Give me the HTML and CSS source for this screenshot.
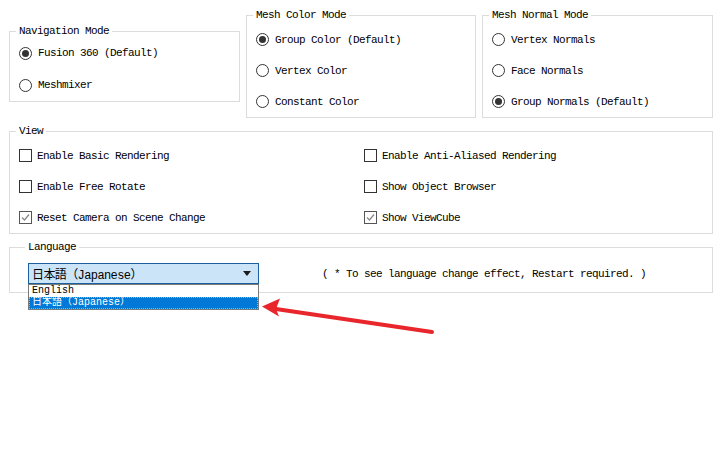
FILE: index.html
```html
<!DOCTYPE html>
<html lang="en">
<head>
<meta charset="utf-8">
<title>Preferences</title>
<link rel="stylesheet" href="styles.css">
</head>
<body>
<div class="page">
  <div class="top-row">
    <fieldset class="group nav">
      <legend>Navigation Mode</legend>
      <div class="opt"><span class="radio on"></span>Fusion 360 (Default)</div>
      <div class="opt"><span class="radio"></span>Meshmixer</div>
    </fieldset>
    <fieldset class="group mesh w230">
      <legend>Mesh Color Mode</legend>
      <div class="opt"><span class="radio on"></span>Group Color (Default)</div>
      <div class="opt"><span class="radio"></span>Vertex Color</div>
      <div class="opt"><span class="radio"></span>Constant Color</div>
    </fieldset>
    <fieldset class="group mesh">
      <legend>Mesh Normal Mode</legend>
      <div class="opt"><span class="radio"></span>Vertex Normals</div>
      <div class="opt"><span class="radio"></span>Face Normals</div>
      <div class="opt"><span class="radio on"></span>Group Normals (Default)</div>
    </fieldset>
  </div>

  <fieldset class="group view">
    <legend>View</legend>
    <div class="view-grid">
      <div class="opt"><span class="check"></span>Enable Basic Rendering</div>
      <div class="opt"><span class="check"></span>Enable Anti-Aliased Rendering</div>
      <div class="opt"><span class="check"></span>Enable Free Rotate</div>
      <div class="opt"><span class="check"></span>Show Object Browser</div>
      <div class="opt"><span class="check on"><svg viewBox="0 0 11 11" width="11" height="11"><polyline points="2,5.5 4.5,8 9,2.5" fill="none" stroke="#8a8a8a" stroke-width="1.3"/></svg></span>Reset Camera on Scene Change</div>
      <div class="opt"><span class="check on"><svg viewBox="0 0 11 11" width="11" height="11"><polyline points="2,5.5 4.5,8 9,2.5" fill="none" stroke="#8a8a8a" stroke-width="1.3"/></svg></span>Show ViewCube</div>
    </div>
  </fieldset>

  <fieldset class="group lang">
    <legend>Language</legend>
    <div class="lang-row">
      <div class="combo-wrap">
        <div class="combo"><span>日本語（Japanese）</span><span class="caret"></span></div>
        <ul class="dropdown">
          <li>English</li>
          <li class="sel">日本語（Japanese）</li>
        </ul>
      </div>
      <span class="note">( * To see language change effect, Restart required. )</span>
    </div>
  </fieldset>

  <svg class="arrow" width="722" height="461" viewBox="0 0 722 461">
    <line x1="432" y1="332" x2="276" y2="309" stroke="#e8262b" stroke-width="4" stroke-linecap="round"/>
    <polygon points="262,306.5 280,298.5 276,309 279,316.5" fill="#e8262b"/>
  </svg>
</div>
</body>
</html>
```

FILE: styles.css
```css
html, body {
  margin: 0;
  padding: 0;
  background: #ffffff;
}

.page {
  position: relative;
  width: 722px;
  height: 461px;
  padding: 9px 0 0 9px;
  box-sizing: border-box;
  font-family: "Liberation Mono", "Noto Sans CJK JP", monospace;
  font-size: 11px;
  letter-spacing: -0.6px;
  color: #000;
}

.top-row {
  display: flex;
  align-items: flex-start;
  gap: 6px;
}

.group {
  margin: 0;
  min-width: 0;
  box-sizing: border-box;
  border: 1px solid #dcdcdc;
  padding: 0 0 0 9px;
}

.group legend {
  padding: 0 3px;
  margin-left: -3px;
  line-height: 12px;
  height: 12px;
}

.nav {
  width: 231px;
  margin-top: 16px;
}

.nav .opt {
  height: 32px;
}

.mesh {
  width: 231px;
  padding-top: 3px;
}

.mesh.w230 {
  width: 230px;
}

.opt {
  display: flex;
  align-items: center;
  gap: 6px;
  height: 31px;
  white-space: nowrap;
}

.radio {
  flex: none;
  width: 13px;
  height: 13px;
  box-sizing: border-box;
  border: 1px solid #333;
  border-radius: 50%;
  background: #fff;
  display: flex;
  align-items: center;
  justify-content: center;
}

.radio.on::after {
  content: "";
  width: 7px;
  height: 7px;
  border-radius: 50%;
  background: #333;
}

.check {
  flex: none;
  width: 13px;
  height: 13px;
  box-sizing: border-box;
  border: 1px solid #333;
  background: #fff;
  display: flex;
  align-items: center;
  justify-content: center;
}

.check.on {
  border-color: #555;
}

.view {
  width: 704px;
  margin-top: 7px;
  padding-top: 3px;
}

.view-grid {
  display: grid;
  grid-template-columns: 345px 1fr;
}

.view-grid .opt {
  gap: 5px;
}

.lang {
  width: 704px;
  margin-top: 7px;
  padding: 10px 0 8px 18px;
}

.lang-row {
  display: flex;
  align-items: center;
}

.combo-wrap {
  position: relative;
}

.combo {
  width: 231px;
  height: 21px;
  box-sizing: border-box;
  border: 1px solid #1a5f9e;
  background: #cce4f7;
  display: flex;
  align-items: center;
  justify-content: space-between;
  padding: 0 7px 0 3px;
  font-size: 12px;
}

.caret {
  width: 0;
  height: 0;
  border-left: 4px solid transparent;
  border-right: 4px solid transparent;
  border-top: 5px solid #1a1a1a;
}

.dropdown {
  position: absolute;
  left: 0;
  top: 21px;
  width: 231px;
  box-sizing: border-box;
  margin: 0;
  padding: 0;
  list-style: none;
  border: 1px solid #7a7a7a;
  background: #fff;
  z-index: 2;
}

.dropdown li {
  height: 12px;
  line-height: 12px;
  padding-left: 3px;
  font-size: 10px;
  letter-spacing: 0;
  overflow: hidden;
}

.dropdown li.sel {
  background: #0078d7;
  color: #fff;
  outline: 1px dotted #f2a23c;
  outline-offset: -1px;
}

.note {
  margin-left: 63px;
}

.arrow {
  position: absolute;
  left: 0;
  top: 0;
  pointer-events: none;
  z-index: 3;
}
```
